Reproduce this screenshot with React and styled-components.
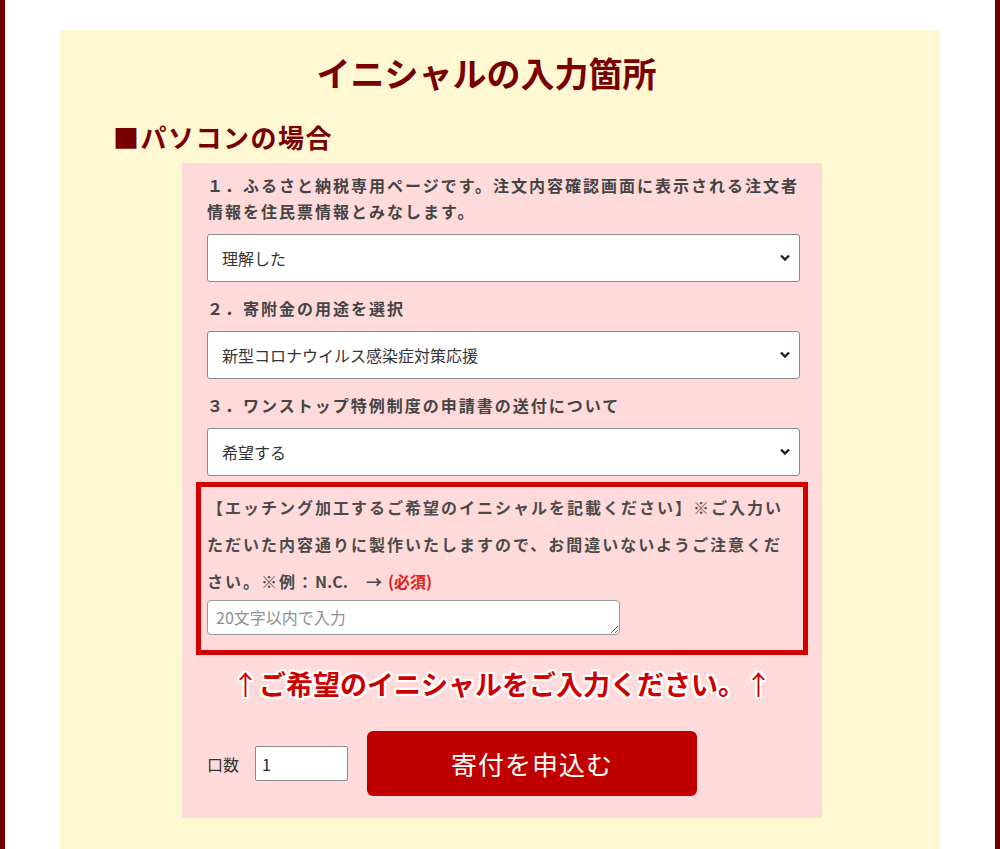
import React from "react";
import styled, { createGlobalStyle } from "styled-components";

const maroon = "#780000";
const red = "#cc0000";

const GlobalStyle = createGlobalStyle`
  html, body {
    margin: 0;
    padding: 0;
    background: #fff;
  }
  body {
    font-family: "Noto Sans CJK JP", "Noto Sans", sans-serif;
    color: #333;
  }
`;

const Frame = styled.div`
  min-height: 849px;
  box-sizing: border-box;
  border-left: 5px solid #6e0000;
  border-right: 5px solid #6e0000;
  padding-top: 30px;
  background: #fff;
`;

const Panel = styled.section`
  margin: 0 55px;
  background: #fff8d2;
  padding-bottom: 60px;
`;

const Title = styled.h2`
  margin: 0;
  padding: 19px 27px 0 0;
  text-align: center;
  font-size: 34px;
  line-height: 48px;
  font-weight: 700;
  color: ${maroon};
`;

const SubTitle = styled.h3`
  margin: 22px 0 0 53px;
  font-size: 26px;
  line-height: 36px;
  font-weight: 700;
  letter-spacing: 1.5px;
  color: ${maroon};
`;

const FormBox = styled.div`
  margin: 8px 0 0 122px;
  width: 640px;
  box-sizing: border-box;
  background: #ffdada;
  padding: 9px 14px 22px;
`;

const Label = styled.p`
  margin: 0 0 10px 11px;
  font-size: 16px;
  line-height: 26px;
  font-weight: 700;
  letter-spacing: 2px;
  color: #444;
`;

const SelectWrap = styled.div`
  position: relative;
  margin: 0 8px ${(p) => (p.$last ? "6px" : "13px")} 11px;
`;

const Select = styled.select`
  appearance: none;
  display: block;
  width: 100%;
  height: 48px;
  box-sizing: border-box;
  border: 1px solid #8a8a8a;
  border-radius: 3px;
  background: #fff;
  padding: 0 30px 0 14px;
  font-family: inherit;
  font-size: 16px;
  color: #333;
`;

const Chevron = styled.svg`
  position: absolute;
  right: 10px;
  top: 50%;
  margin-top: -4px;
  pointer-events: none;
`;

const NoticeBox = styled.div`
  border: 5px solid #d40000;
  padding: 2px 15px 15px 6px;
`;

const NoticeText = styled.p`
  margin: 0;
  font-size: 16px;
  line-height: 37px;
  font-weight: 700;
  letter-spacing: 2px;
  color: #4a4a4a;
`;

const Latin = styled.span`
  letter-spacing: 0;
`;

const Required = styled.span`
  margin-left: 4px;
  color: #e02020;
  letter-spacing: 0;
`;

const TextArea = styled.textarea`
  display: block;
  width: 413px;
  height: 35px;
  box-sizing: border-box;
  margin: 0;
  border: 1px solid #999;
  border-radius: 4px;
  padding: 4px 8px;
  font-family: inherit;
  font-size: 16px;
  line-height: 24px;
  color: #333;
  &::placeholder {
    color: #8f8f8f;
  }
`;

const Prompt = styled.p`
  margin: 9px 0 0;
  text-align: center;
  font-size: 27px;
  line-height: 40px;
  font-weight: 700;
  color: ${red};
  text-shadow:
    2px 0 0 #fff, -2px 0 0 #fff, 0 2px 0 #fff, 0 -2px 0 #fff,
    2px 2px 0 #fff, -2px -2px 0 #fff, 2px -2px 0 #fff, -2px 2px 0 #fff,
    0 0 4px #fff;
`;

const Arrow = styled.span`
  font-weight: 400;
`;

const OrderRow = styled.div`
  display: flex;
  align-items: center;
  margin: 27px 0 0 11px;
`;

const QtyLabel = styled.span`
  font-size: 16px;
  color: #333;
  margin-right: 16px;
`;

const QtyInput = styled.input`
  width: 93px;
  height: 35px;
  box-sizing: border-box;
  border: 1px solid #8a8a8a;
  border-radius: 2px;
  padding: 0 6px;
  font-family: inherit;
  font-size: 16px;
  color: #222;
`;

const SubmitButton = styled.button`
  margin-left: 19px;
  width: 330px;
  height: 65px;
  border: none;
  border-radius: 6px;
  background: #c00000;
  color: #fff;
  font-family: inherit;
  font-size: 26px;
  letter-spacing: 1px;
  cursor: pointer;
`;

const fields = [
  {
    label:
      "１．ふるさと納税専用ページです。注文内容確認画面に表示される注文者情報を住民票情報とみなします。",
    value: "理解した",
  },
  { label: "２．寄附金の用途を選択", value: "新型コロナウイルス感染症対策応援" },
  {
    label: "３．ワンストップ特例制度の申請書の送付について",
    value: "希望する",
  },
];

function Dropdown({ value, last }) {
  return (
    <SelectWrap $last={last}>
      <Select defaultValue={value}>
        <option>{value}</option>
      </Select>
      <Chevron width="10" height="8" viewBox="0 0 10 8">
        <polyline
          points="1,1.5 5,5.5 9,1.5"
          fill="none"
          stroke="#222"
          strokeWidth="2.4"
        />
      </Chevron>
    </SelectWrap>
  );
}

export default function App() {
  return (
    <>
      <GlobalStyle />
      <Frame>
        <Panel>
          <Title>イニシャルの入力箇所</Title>
          <SubTitle>■パソコンの場合</SubTitle>
          <FormBox>
            {fields.map((f, i) => (
              <React.Fragment key={i}>
                <Label>{f.label}</Label>
                <Dropdown value={f.value} last={i === fields.length - 1} />
              </React.Fragment>
            ))}
            <NoticeBox>
              <NoticeText>
                【エッチング加工するご希望のイニシャルを記載ください】※ご入力いただいた内容通りに製作いたしますので、お間違いないようご注意ください。※例：<Latin>N.C.</Latin>　→<Required>(必須)</Required>
              </NoticeText>
              <TextArea placeholder="20文字以内で入力" />
            </NoticeBox>
            <Prompt>
              <Arrow>↑</Arrow>ご希望のイニシャルをご入力ください。<Arrow>↑</Arrow>
            </Prompt>
            <OrderRow>
              <QtyLabel>口数</QtyLabel>
              <QtyInput defaultValue="1" />
              <SubmitButton>寄付を申込む</SubmitButton>
            </OrderRow>
          </FormBox>
        </Panel>
      </Frame>
    </>
  );
}
